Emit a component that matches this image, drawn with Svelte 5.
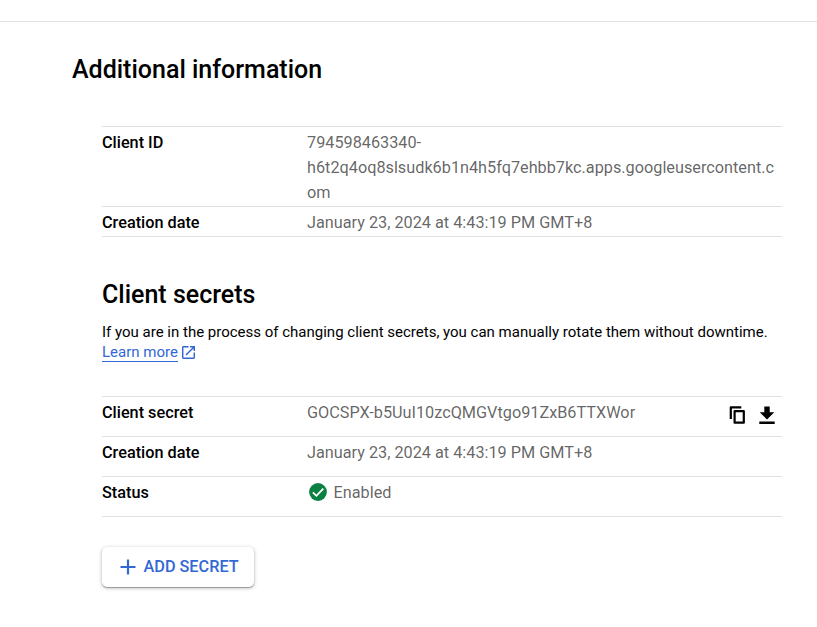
<script>
  const info = [
    ['Client ID', '794598463340-h6t2q4oq8slsudk6b1n4h5fq7ehbb7kc.apps.googleusercontent.com'],
    ['Creation date', 'January 23, 2024 at 4:43:19 PM GMT+8']
  ];
</script>

<main>
  <h2 class="page-title">Additional information</h2>
  <div class="content">
    <dl class="table compact">
      {#each info as [label, value]}
        <div class="row"><dt>{label}</dt><dd>{value}</dd></div>
      {/each}
    </dl>

    <h2 class="secrets-title">Client secrets</h2>
    <p>
      <span class="help">If you are in the process of changing client secrets, you can manually rotate them without downtime.</span>
      <span class="learn">
        <a href="#learn">Learn more</a>
        <svg width="13" height="13" viewBox="0 0 18 18" fill="currentColor"><path d="M16 16H2V2h7V0H2a2 2 0 0 0-2 2v14a2 2 0 0 0 2 2h14c1.1 0 2-.9 2-2V9h-2v7zM11 0v2h3.59l-9.83 9.83 1.41 1.41L16 3.41V7h2V0h-7z" /></svg>
      </span>
    </p>

    <dl class="table roomy">
      <div class="row">
        <dt>Client secret</dt>
        <dd>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</dd>
        <div class="actions">
          <svg width="16" height="18" viewBox="0 0 16 18" fill="none" stroke="#000" stroke-width="2.200" stroke-linejoin="round"><path d="M1.800 13V1.300h10.500M5.600 5.200h9.200v11.500H5.600z" /></svg>
          <svg width="16" height="18" viewBox="0 0 16 18" fill="#000"><path d="M5.300 .5h5.400v5.700h4.600L8 13.500 .700 6.200h4.600zM.3 15.500h15.400V18H.3z" /></svg>
        </div>
      </div>
      <div class="row"><dt>Creation date</dt><dd>January 23, 2024 at 4:43:19 PM GMT+8</dd></div>
      <div class="row">
        <dt>Status</dt>
        <dd class="status">
          <svg width="18" height="18" viewBox="0 0 18 18"><circle cx="9" cy="9" r="8.900" fill="#0b8043" /><path d="M3.800 9.300l3.600 3.500 6.900-7.100" fill="none" stroke="#fff" stroke-width="1.800" /></svg>
          <span>Enabled</span>
        </dd>
      </div>
    </dl>

    <button>
      <svg width="16" height="16" viewBox="0 0 16 16" stroke="currentColor" stroke-width="2.200"><path d="M8 .5v15M.5 8h15" /></svg>
      <span>ADD SECRET</span>
    </button>
  </div>
</main>

<style>
  :global(body) { background: #fff; }
  main {
    box-sizing: border-box;
    margin-top: 21px;
    height: 606px;
    border-top: 1px solid #e0e0e0;
    padding: 33px 35px 0 72px;
    font-family: Roboto, sans-serif;
    color: #000;
    overflow: hidden;
  }
  h2, p, dl, dt, dd { margin: 0; }
  h2 { font-size: 25px; font-weight: 500; line-height: 30px; }
  .content { padding-left: 30px; }
  .table { border-top: 1px solid #e0e0e0; font-size: 16.25px; line-height: 25px; }
  .compact { margin-top: 41px; }
  .row { display: flex; box-sizing: border-box; border-bottom: 1px solid #e0e0e0; padding-top: 3px; }
  .compact .row { min-height: 30px; padding-bottom: 1px; }
  .roomy .row { height: 40px; }
  dt { width: 205px; flex: none; font-weight: 500; }
  dd { flex: 1; min-width: 0; font-weight: 400; color: rgba(0, 0, 0, 0.62); overflow-wrap: anywhere; }
  .secrets-title { margin-top: 43px; }
  p { margin-top: 12px; font-size: 15px; line-height: 20px; }
  .help { display: block; white-space: nowrap; }
  .learn { display: flex; gap: 4px; color: #3367d6; }
  .learn svg { margin-top: 4px; }
  a { color: inherit; text-decoration: none; height: 19px; border-bottom: 1px solid #3367d6; }
  .roomy { margin-top: 34px; }
  .actions { display: flex; gap: 14px; padding: 6px 7px 0 0; }
  .status { display: flex; gap: 6.5px; }
  .status svg { margin: 3px 0 0 2px; }
  button {
    display: flex; align-items: center; gap: 7.5px; margin-top: 30px; width: 152px; height: 40px; padding: 0 0 0 18px;
    border: 0; border-radius: 5px; background: #fff; color: #3367d6; font: 500 16.25px/20px Roboto, sans-serif; white-space: nowrap;
    box-shadow: 0 1px 1px rgba(0, 0, 0, 0.3), 0 1px 4px rgba(0, 0, 0, 0.26);
  }
</style>
